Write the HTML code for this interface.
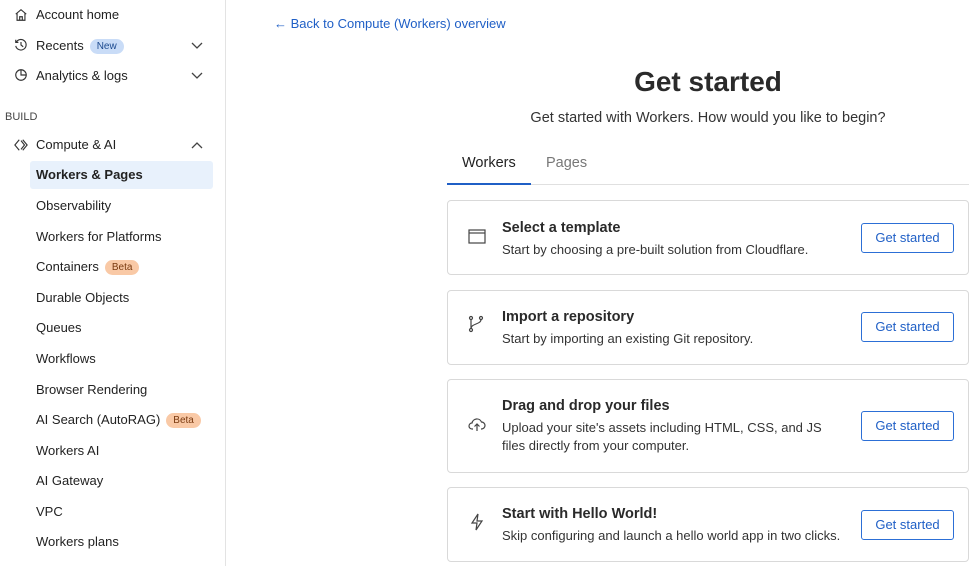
<!DOCTYPE html>
<html><head><meta charset="utf-8"><style>
*{box-sizing:border-box;margin:0;padding:0}
body{width:974px;height:566px;overflow:hidden;background:#fff;font-family:"Liberation Sans",sans-serif;color:#1f1f1f;position:relative}
.side{position:absolute;left:0;top:0;width:226px;height:566px;border-right:1px solid #e3e3e3}
.it{position:absolute;left:36px;font-size:13px;color:#222}
.ic{position:absolute;left:14px;width:14px;height:14px}
.chev{position:absolute;left:191px;width:12px;height:8px}
.badge{display:inline-block;font-size:10px;padding:2px 7px;border-radius:9px;margin-left:6px;vertical-align:1px}
.card{position:absolute;left:447px;width:522px;border:1px solid #d9d9d9;border-radius:4px}
.card h3{position:absolute;left:54px;font-size:14.5px;font-weight:bold;color:#2a2a2a}
.card p{position:absolute;left:54px;font-size:13px;color:#333;line-height:18px}
.btn{position:absolute;left:413px;width:93px;height:30px;border:1px solid #2c6fd6;border-radius:3px;color:#1f5fc6;font-size:13px;text-align:center;line-height:28px}
.cic{position:absolute;left:20px;width:18px;height:18px}
</style></head><body>
<div class="side">
<svg class="ic" style="top:8px" viewBox="0 0 16 16" fill="none" stroke="#333" stroke-width="1.3"><path d="M2 7L8 2l6 5M3.5 6v8h9V6M6.5 14V10h3v4"/></svg>
<div class="it" style="top:7px">Account home</div>
<svg class="ic" style="top:38px" viewBox="0 0 16 16" fill="none" stroke="#333" stroke-width="1.3"><path d="M2.5 5A6 6 0 1 1 2 9M2 2v3h3M8 4.5V8l2.5 2"/></svg>
<div class="it" style="top:38px">Recents<span class="badge" style="background:#c9dcf7;color:#1c4a8f">New</span></div>
<svg class="chev" style="top:42px" viewBox="0 0 12 8" fill="none" stroke="#444" stroke-width="1.3"><path d="M1 1l5 5 5-5"/></svg>
<svg class="ic" style="top:68px" viewBox="0 0 16 16" fill="none" stroke="#333" stroke-width="1.3"><circle cx="8" cy="8" r="6"/><path d="M8 2v6h6"/></svg>
<div class="it" style="top:68px">Analytics &amp; logs</div>
<svg class="chev" style="top:72px" viewBox="0 0 12 8" fill="none" stroke="#444" stroke-width="1.3"><path d="M1 1l5 5 5-5"/></svg>
<div style="position:absolute;left:5px;top:111px;font-size:11px;color:#444">BUILD</div>
<svg class="ic" style="top:138px" viewBox="0 0 16 16" fill="none" stroke="#333" stroke-width="1.3"><path d="M6 2L1 8l5 6M10 2l5 6-5 6M8 3l4 5-4 5"/></svg>
<div class="it" style="top:137px">Compute &amp; AI</div>
<svg class="chev" style="top:141px" viewBox="0 0 12 8" fill="none" stroke="#444" stroke-width="1.3"><path d="M1 7l5-5 5 5"/></svg>
<div style="position:absolute;left:30px;top:161px;width:183px;height:28px;background:#e8f1fc;border-radius:3px"></div>
<div class="it" style="top:167px;font-weight:bold">Workers &amp; Pages</div>
<div class="it" style="top:198px">Observability</div>
<div class="it" style="top:229px">Workers for Platforms</div>
<div class="it" style="top:259px">Containers<span class="badge" style="background:#f9c9a6;color:#7a3a10">Beta</span></div>
<div class="it" style="top:290px">Durable Objects</div>
<div class="it" style="top:320px">Queues</div>
<div class="it" style="top:351px">Workflows</div>
<div class="it" style="top:382px">Browser Rendering</div>
<div class="it" style="top:412px">AI Search (AutoRAG)<span class="badge" style="background:#f9c9a6;color:#7a3a10">Beta</span></div>
<div class="it" style="top:443px">Workers AI</div>
<div class="it" style="top:473px">AI Gateway</div>
<div class="it" style="top:504px">VPC</div>
<div class="it" style="top:534px">Workers plans</div>
</div>
<div style="position:absolute;left:274px;top:16px;font-size:13px;color:#1f5fc6">← Back to Compute (Workers) overview</div>
<div style="position:absolute;left:447px;width:522px;top:66px;text-align:center;font-size:28px;font-weight:bold;color:#2a2a2a">Get started</div>
<div style="position:absolute;left:447px;width:522px;top:110px;text-align:center;font-size:14.5px;color:#333">Get started with Workers. How would you like to begin?</div>
<div style="position:absolute;left:447px;top:184px;width:522px;border-bottom:1px solid #e0e0e0"></div>
<div style="position:absolute;left:447px;top:183px;width:84px;border-bottom:2px solid #1f5fc6"></div>
<div style="position:absolute;left:462px;top:155px;font-size:14.5px;color:#222">Workers</div>
<div style="position:absolute;left:546px;top:155px;font-size:14.5px;color:#777">Pages</div>
<div class="card" style="top:200px;height:75px">
<svg class="cic" style="top:27px" viewBox="0 0 18 18" fill="none" stroke="#444" stroke-width="1.2"><rect x="1" y="2" width="16" height="13"/><path d="M1 5h16"/></svg>
<h3 style="top:19px">Select a template</h3><p style="top:40px">Start by choosing a pre-built solution from Cloudflare.</p><div class="btn" style="top:22px">Get started</div></div>
<div class="card" style="top:290px;height:75px">
<svg class="cic" style="top:24px" viewBox="0 0 18 18" fill="none" stroke="#444" stroke-width="1.2"><circle cx="3" cy="3" r="1.5"/><circle cx="3" cy="15" r="1.5"/><circle cx="13" cy="3" r="1.5"/><path d="M3 4.5v9M13 4.5c0 5-10 4-10 9"/></svg>
<h3 style="top:18px">Import a repository</h3><p style="top:39px">Start by importing an existing Git repository.</p><div class="btn" style="top:21px">Get started</div></div>
<div class="card" style="top:379px;height:94px">
<svg class="cic" style="top:35px" viewBox="0 0 18 18" fill="none" stroke="#444" stroke-width="1.2"><path d="M5 14H4a3 3 0 0 1 0-6 5 5 0 0 1 9.5-1A3.5 3.5 0 0 1 13.5 14H13M9 9v7M6.5 11.5L9 9l2.5 2.5"/></svg>
<h3 style="top:18px">Drag and drop your files</h3><p style="top:39px">Upload your site's assets including HTML, CSS, and JS<br>files directly from your computer.</p><div class="btn" style="top:31px">Get started</div></div>
<div class="card" style="top:487px;height:75px">
<svg class="cic" style="top:25px" viewBox="0 0 18 18" fill="none" stroke="#444" stroke-width="1.2"><path d="M10 1L4 10h5l-1 7 6-9H9z"/></svg>
<h3 style="top:18px">Start with Hello World!</h3><p style="top:39px">Skip configuring and launch a hello world app in two clicks.</p><div class="btn" style="top:22px">Get started</div></div>
</body></html>
